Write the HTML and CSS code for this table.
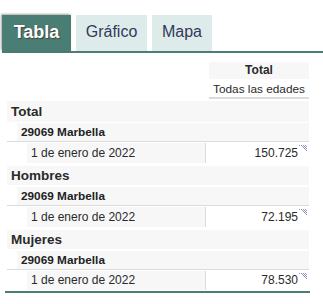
FILE: index.html
```html
<!DOCTYPE html>
<html lang="es">
<head>
<meta charset="utf-8">
<link rel="stylesheet" href="styles.css">
</head>
<body>
<div class="page">
  <div class="tabs">
    <div class="tab active">Tabla</div>
    <div class="tab">Gráfico</div>
    <div class="tab mapa">Mapa</div>
  </div>
  <div class="tabbar"></div>

  <div class="table">
    <div class="head-row"><div class="head h1">Total</div></div>
    <div class="head-row"><div class="head h2">Todas las edades</div></div>

    <div class="group first">Total</div>
    <div class="sub">29069 Marbella</div>
    <div class="data">
      <div class="label">1 de enero de 2022</div>
      <div class="value">150.725<svg class="mark" width="8" height="7" viewBox="0 0 8 7"><g fill="#8597b8"><rect x="0" y="0" width="1" height="1"/><rect x="2" y="0" width="1" height="1"/><rect x="4" y="0" width="1" height="1"/><rect x="6" y="0" width="1" height="1"/><rect x="3" y="1" width="1" height="1"/><rect x="5" y="1" width="1" height="1"/><rect x="7" y="1" width="1" height="1"/><rect x="4" y="2" width="1" height="1"/><rect x="6" y="2" width="1" height="1"/><rect x="5" y="3" width="1" height="1"/><rect x="7" y="3" width="1" height="1"/><rect x="6" y="4" width="1" height="1"/><rect x="7" y="5" width="1" height="1"/></g></svg></div>
    </div>

    <div class="group">Hombres</div>
    <div class="sub">29069 Marbella</div>
    <div class="data">
      <div class="label">1 de enero de 2022</div>
      <div class="value">72.195<svg class="mark" width="8" height="7" viewBox="0 0 8 7"><g fill="#8597b8"><rect x="0" y="0" width="1" height="1"/><rect x="2" y="0" width="1" height="1"/><rect x="4" y="0" width="1" height="1"/><rect x="6" y="0" width="1" height="1"/><rect x="3" y="1" width="1" height="1"/><rect x="5" y="1" width="1" height="1"/><rect x="7" y="1" width="1" height="1"/><rect x="4" y="2" width="1" height="1"/><rect x="6" y="2" width="1" height="1"/><rect x="5" y="3" width="1" height="1"/><rect x="7" y="3" width="1" height="1"/><rect x="6" y="4" width="1" height="1"/><rect x="7" y="5" width="1" height="1"/></g></svg></div>
    </div>

    <div class="group">Mujeres</div>
    <div class="sub">29069 Marbella</div>
    <div class="data last">
      <div class="label">1 de enero de 2022</div>
      <div class="value">78.530<svg class="mark" width="8" height="7" viewBox="0 0 8 7"><g fill="#8597b8"><rect x="0" y="0" width="1" height="1"/><rect x="2" y="0" width="1" height="1"/><rect x="4" y="0" width="1" height="1"/><rect x="6" y="0" width="1" height="1"/><rect x="3" y="1" width="1" height="1"/><rect x="5" y="1" width="1" height="1"/><rect x="7" y="1" width="1" height="1"/><rect x="4" y="2" width="1" height="1"/><rect x="6" y="2" width="1" height="1"/><rect x="5" y="3" width="1" height="1"/><rect x="7" y="3" width="1" height="1"/><rect x="6" y="4" width="1" height="1"/><rect x="7" y="5" width="1" height="1"/></g></svg></div>
    </div>
  </div>
  <div class="bottomline"></div>
</div>
</body>
</html>
```

FILE: styles.css
```css
* { box-sizing: border-box; }
html, body { margin: 0; padding: 0; background: #fff; }
body { font-family: "Liberation Sans", Arial, sans-serif; color: #2a2a2a; }
.page { padding-top: 15px; }

.tabs { display: flex; gap: 5px; padding-left: 2px; height: 36px; }
.tab {
  background: #ddecea;
  color: #33385a;
  font-size: 16px;
  width: 71px;
  display: flex;
  align-items: center;
  justify-content: center;
  padding-bottom: 2px;
}
.tab.mapa { width: 60px; }
.tab.active {
  width: 69px;
  background: #4a7d73;
  color: #fff;
  font-weight: bold;
  font-size: 18px;
  box-shadow: -1px -1px 2px rgba(0,0,0,0.35);
  text-shadow: 1px 1px 1px rgba(60,20,20,0.5);
}
.tabbar { height: 2px; margin-left: 2px; background: #4a7d73; }

.table { margin-left: 7px; width: 302px; font-size: 11.5px; }
.head-row { display: flex; justify-content: flex-end; }
.head {
  width: 100px;
  text-align: center;
}
.h1 { margin-top: 9px; height: 17px; line-height: 17px; background: #f7f7f7; font-weight: bold; font-size: 12px; }
.h2 { margin-top: 2px; height: 18px; line-height: 16px; border-bottom: 2px solid #dcdcdc; font-size: 11.8px; }

.group {
  background: #f7f7f7;
  height: 19px;
  line-height: 19px;
  margin-top: 3px;
  padding-left: 4px;
  font-weight: bold;
  font-size: 13.5px;
  color: #2a2a2a;
}
.group.first { height: 21px; line-height: 21px; margin-top: 2px; }
.sub {
  background: #f7f7f7;
  margin-left: 10px;
  margin-top: 2px;
  height: 18px;
  line-height: 18px;
  padding-left: 4px;
  font-weight: bold;
  font-size: 11.8px;
  color: #222;
}
.group.first + .sub { margin-top: 1px; }
.data {
  display: flex;
  border-top: 1px solid #dcdcdc;
  padding-top: 1px;
}
.label {
  margin-left: 20px;
  width: 179px;
  background: #f7f7f7;
  height: 20px;
  line-height: 20px;
  padding-left: 4px;
  border-right: 1px solid #dcdcdc;
  font-size: 12px;
}
.data.last .label, .data.last .value { height: 19px; line-height: 18px; }
.value {
  flex: 1;
  position: relative;
  text-align: right;
  padding-right: 11px;
  height: 20px;
  line-height: 20px;
  font-size: 12px;
}
.mark { position: absolute; right: 2px; top: 2px; }
.bottomline { height: 2px; width: 305px; margin-left: 5px; margin-top: 1px; background: #4a7d73; }
```
